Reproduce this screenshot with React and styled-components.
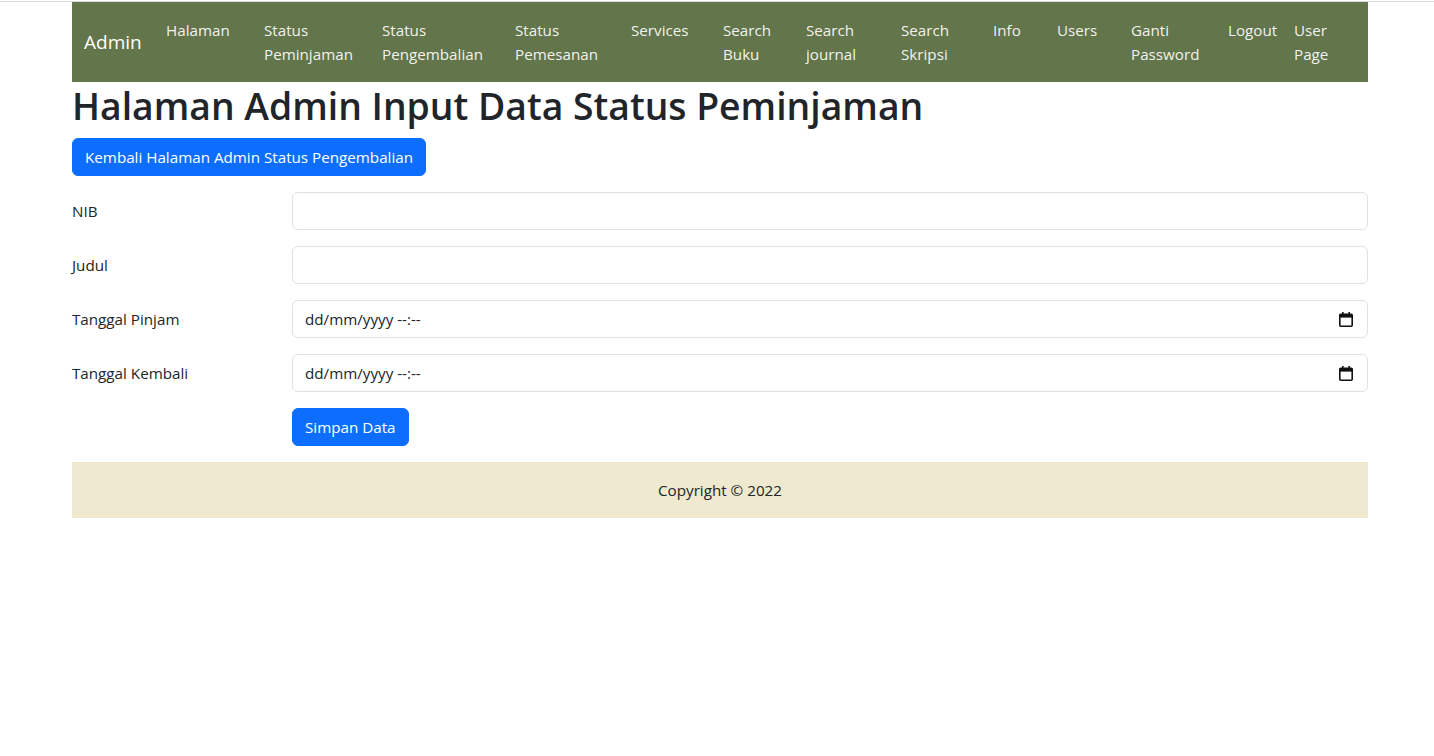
import React from "react";
import styled, { createGlobalStyle } from "styled-components";

const GlobalStyle = createGlobalStyle`
  * { box-sizing: border-box; }
  body {
    margin: 0;
    padding-top: 1px;
    font-family: "Open Sans", "Noto Sans", sans-serif;
    font-size: 15.2px;
    line-height: 1.5;
    color: #212529;
    background: #fff;
  }
`;

const TopLine = styled.div`
  height: 1px;
  background: #dcdcdc;
`;

const Container = styled.div`
  width: 1296px;
  margin: 0 0 0 72px;
`;

const Navbar = styled.nav`
  display: flex;
  align-items: center;
  background: #63754a;
  padding: 8px 0 8px 12px;
`;

const Brand = styled.a`
  width: 82px;
  font-size: 19px;
  color: #fff;
  text-decoration: none;
  line-height: 30px;
`;

const NavList = styled.ul`
  display: flex;
  list-style: none;
  margin: 0;
  padding: 0;
  flex: 1;
`;

const NavItem = styled.li`
  flex: ${(p) => (p.$w ? `0 0 ${p.$w}px` : "1")};
`;

const NavLink = styled.a`
  display: block;
  padding: 8px 0;
  color: rgba(255, 255, 255, 0.93);
  text-decoration: none;
  line-height: 24px;
  white-space: nowrap;
`;

const Title = styled.h1`
  margin: 0 0 8px;
  font-size: 37.3px;
  font-weight: 600;
  line-height: 48px;
`;

const Button = styled.button`
  font: inherit;
  color: #fff;
  background: #0d6efd;
  border: 1px solid #0d6efd;
  border-radius: 6px;
  padding: 6px 12px;
  line-height: 24px;
  cursor: pointer;
`;

const Form = styled.form`
  margin-top: 16px;
`;

const Row = styled.div`
  display: grid;
  grid-template-columns: 220px 1fr;
  align-items: center;
  margin-bottom: 16px;
`;

const Label = styled.label``;

const Field = styled.div`
  position: relative;
`;

const Input = styled.input`
  display: block;
  width: 100%;
  height: 38px;
  padding: 6px 12px;
  font: inherit;
  color: #212529;
  border: 1px solid #dee2e6;
  border-radius: 6px;
  outline: none;
  &::placeholder {
    color: #212529;
  }
`;

const CalendarIcon = styled.svg`
  position: absolute;
  right: 15px;
  top: 12px;
  width: 14px;
  height: 15px;
`;

const Footer = styled.footer`
  background: #efe9cf;
  text-align: center;
  padding: 16px 0;
  line-height: 24px;
`;

const links = [
  { t: ["Halaman"], w: 98 },
  { t: ["Status", "Peminjaman"], w: 118 },
  { t: ["Status", "Pengembalian"], w: 133 },
  { t: ["Status", "Pemesanan"], w: 116 },
  { t: ["Services"], w: 92 },
  { t: ["Search", "Buku"], w: 83 },
  { t: ["Search", "journal"], w: 95 },
  { t: ["Search", "Skripsi"], w: 92 },
  { t: ["Info"], w: 64 },
  { t: ["Users"], w: 74 },
  { t: ["Ganti", "Password"], w: 97 },
  { t: ["Logout"], w: 66 },
  { t: ["User", "Page"] },
];

const Calendar = () => (
  <CalendarIcon viewBox="0 0 14 15">
    <rect x="3" y="0" width="1.6" height="3" fill="#111" />
    <rect x="9.4" y="0" width="1.6" height="3" fill="#111" />
    <rect x="0.8" y="2.2" width="12.4" height="12" rx="1" fill="none" stroke="#111" strokeWidth="1.6" />
    <rect x="0.8" y="2.2" width="12.4" height="3.4" fill="#111" />
  </CalendarIcon>
);

const fields = [
  { label: "NIB" },
  { label: "Judul" },
  { label: "Tanggal Pinjam", date: true },
  { label: "Tanggal Kembali", date: true },
];

export default function App() {
  return (
    <>
      <GlobalStyle />
      <TopLine />
      <Container>
        <Navbar>
          <Brand href="#">Admin</Brand>
          <NavList>
            {links.map((l, i) => (
              <NavItem key={i} $w={l.w}>
                <NavLink href="#">
                  {l.t.map((s, j) => (
                    <div key={j}>{s}</div>
                  ))}
                </NavLink>
              </NavItem>
            ))}
          </NavList>
        </Navbar>
        <Title>Halaman Admin Input Data Status Peminjaman</Title>
        <Button type="button">Kembali Halaman Admin Status Pengembalian</Button>
        <Form onSubmit={(e) => e.preventDefault()}>
          {fields.map((f) => (
            <Row key={f.label}>
              <Label>{f.label}</Label>
              <Field>
                <Input type="text" placeholder={f.date ? "dd/mm/yyyy --:--" : ""} />
                {f.date && <Calendar />}
              </Field>
            </Row>
          ))}
          <Row>
            <span />
            <div>
              <Button type="submit">Simpan Data</Button>
            </div>
          </Row>
        </Form>
        <Footer>Copyright © 2022</Footer>
      </Container>
    </>
  );
}
